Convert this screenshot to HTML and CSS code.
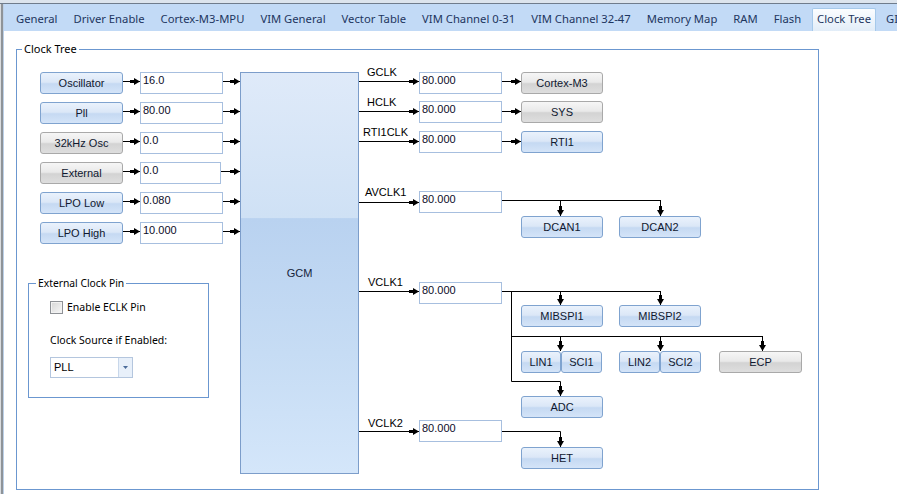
FILE: index.html
```html
<!DOCTYPE html>
<html>
<head>
<meta charset="utf-8">
<link rel="stylesheet" href="styles.css">
</head>
<body>
<div class="window">
  <div class="topstrip"></div>
  <div class="body">
    <div class="edge"></div>
    <div class="main">
      <div class="tabs">
        <div class="tab">General</div>
        <div class="tab">Driver Enable</div>
        <div class="tab">Cortex-M3-MPU</div>
        <div class="tab">VIM General</div>
        <div class="tab">Vector Table</div>
        <div class="tab">VIM Channel 0-31</div>
        <div class="tab">VIM Channel 32-47</div>
        <div class="tab">Memory Map</div>
        <div class="tab">RAM</div>
        <div class="tab">Flash</div>
        <div class="tab active">Clock Tree</div>
        <div class="tab">GIO</div>
      </div>
      <div class="page">
        <div class="group clocktree">
          <span class="legend">Clock Tree</span>
          <div class="leftcol">
            <div class="inputs">
              <div class="row">
                <div class="btn">Oscillator</div>
                <svg class="arrow"><line x1="0" y1="9.5" x2="100%" y2="9.5" marker-end="url(#ah)"/></svg>
                <div class="tb">16.0</div>
                <svg class="arrow grow"><line x1="0" y1="9.5" x2="100%" y2="9.5" marker-end="url(#ah)"/></svg>
              </div>
              <div class="row">
                <div class="btn">Pll</div>
                <svg class="arrow"><line x1="0" y1="9.5" x2="100%" y2="9.5" marker-end="url(#ah)"/></svg>
                <div class="tb">80.00</div>
                <svg class="arrow grow"><line x1="0" y1="9.5" x2="100%" y2="9.5" marker-end="url(#ah)"/></svg>
              </div>
              <div class="row">
                <div class="btn gray">32kHz Osc</div>
                <svg class="arrow"><line x1="0" y1="9.5" x2="100%" y2="9.5" marker-end="url(#ah)"/></svg>
                <div class="tb">0.0</div>
                <svg class="arrow grow"><line x1="0" y1="9.5" x2="100%" y2="9.5" marker-end="url(#ah)"/></svg>
              </div>
              <div class="row">
                <div class="btn gray">External</div>
                <svg class="arrow"><line x1="0" y1="9.5" x2="100%" y2="9.5" marker-end="url(#ah)"/></svg>
                <div class="tb narrow">0.0</div>
                <svg class="arrow grow"><line x1="0" y1="9.5" x2="100%" y2="9.5" marker-end="url(#ah)"/></svg>
              </div>
              <div class="row">
                <div class="btn">LPO Low</div>
                <svg class="arrow"><line x1="0" y1="9.5" x2="100%" y2="9.5" marker-end="url(#ah)"/></svg>
                <div class="tb">0.080</div>
                <svg class="arrow grow"><line x1="0" y1="9.5" x2="100%" y2="9.5" marker-end="url(#ah)"/></svg>
              </div>
              <div class="row">
                <div class="btn">LPO High</div>
                <svg class="arrow"><line x1="0" y1="9.5" x2="100%" y2="9.5" marker-end="url(#ah)"/></svg>
                <div class="tb">10.000</div>
                <svg class="arrow grow"><line x1="0" y1="9.5" x2="100%" y2="9.5" marker-end="url(#ah)"/></svg>
              </div>
            </div>
            <div class="group extpin">
              <span class="legend small">External Clock Pin</span>
              <label class="check"><span class="box"></span>Enable ECLK Pin</label>
              <div class="caption">Clock Source if Enabled:</div>
              <div class="combo">
                <span class="combo-text">PLL</span>
                <span class="drop"><svg width="5" height="3" viewBox="0 0 5 3"><polygon points="0,0 5,0 2.5,3" fill="#4c6c9a"/></svg></span>
              </div>
            </div>
          </div>
          <div class="gcm">GCM</div>
          <div class="outputs">
            <svg class="wires" width="459" height="439" viewBox="359 50 459 439">
              <defs>
                <marker id="ah" viewBox="0 0 10 8" refX="10" refY="4" markerWidth="10" markerHeight="8" markerUnits="userSpaceOnUse" orient="auto">
                  <path class="head" d="M0,2.5H4V0.5L10,4L4,7.5V5.5H0Z"/>
                </marker>
              </defs>
              <g class="arrowed">
                <path d="M359,81.5H419"/>
                <path d="M359,111.5H419"/>
                <path d="M359,141.5H419"/>
                <path d="M359,202.5H419"/>
                <path d="M359,291.5H419"/>
                <path d="M359,431.5H419"/>
                <path d="M502,81.5H521"/>
                <path d="M502,111.5H521"/>
                <path d="M502,141.5H521"/>
                <path d="M560.5,200.5V216"/>
                <path d="M660.5,200.5V216"/>
                <path d="M560.5,291.5V305"/>
                <path d="M660.5,291.5V305"/>
                <path d="M511.5,291.5V381.5H560.5V396"/>
                <path d="M560.5,336.5V351"/>
                <path d="M660.5,336.5V351"/>
                <path d="M762.5,336.5V351"/>
                <path d="M502,431.5H560.5V447"/>
              </g>
              <g class="plain">
                <path d="M502,200.5H661"/>
                <path d="M502,291.5H661"/>
                <path d="M511.5,336.5H763"/>
              </g>
            </svg>

            <span class="lbl l-gclk">GCLK</span>
            <span class="lbl l-hclk">HCLK</span>
            <span class="lbl l-rti">RTI1CLK</span>
            <span class="lbl l-av">AVCLK1</span>
            <span class="lbl l-v1">VCLK1</span>
            <span class="lbl l-v2">VCLK2</span>

            <div class="tb o-tb1">80.000</div>
            <div class="tb o-tb2">80.000</div>
            <div class="tb o-tb3">80.000</div>
            <div class="tb o-tb4">80.000</div>
            <div class="tb o-tb5">80.000</div>
            <div class="tb o-tb6">80.000</div>

            <div class="btn gray o-cm3">Cortex-M3</div>
            <div class="btn gray o-sys">SYS</div>
            <div class="btn o-rti">RTI1</div>
            <div class="btn o-dcan1">DCAN1</div>
            <div class="btn o-dcan2">DCAN2</div>
            <div class="btn o-mib1">MIBSPI1</div>
            <div class="btn o-mib2">MIBSPI2</div>
            <div class="btn o-lin1">LIN1</div>
            <div class="btn o-sci1">SCI1</div>
            <div class="btn o-lin2">LIN2</div>
            <div class="btn o-sci2">SCI2</div>
            <div class="btn gray o-ecp">ECP</div>
            <div class="btn o-adc">ADC</div>
            <div class="btn o-het">HET</div>
          </div>
        </div>
      </div>
    </div>
  </div>
</div>
</body>
</html>
```

FILE: styles.css
```css
html, body {
  margin: 0;
  padding: 0;
  background: #fff;
}

.window {
  width: 897px;
  height: 494px;
  overflow: hidden;
  background: #fff;
  font-family: "Liberation Sans", Arial, sans-serif;
  font-size: 11px;
  color: #000;
}

.topstrip {
  height: 3px;
  background: #dce4ed;
  border-bottom: 1px solid #6f7c8c;
}

.body {
  display: flex;
  height: 490px;
}

.edge {
  width: 4px;
  flex: none;
  background: linear-gradient(to right, #d9dcdf 0 1px, #8e9398 1px 3px, #bcd0e8 3px 4px);
}

.main {
  flex: 1;
  min-width: 0;
  display: flex;
  flex-direction: column;
}

/* ---------- tabs ---------- */
.tabs {
  height: 27px;
  flex: none;
  background: #c2daf6;
  display: flex;
  align-items: flex-end;
  padding-left: 4px;
  font-family: "Noto Sans", "Open Sans", sans-serif;
  font-size: 11.25px;
  color: #1e3660;
  white-space: nowrap;
  overflow: hidden;
}

.tab {
  flex: none;
  padding: 0 8px;
  height: 22px;
  line-height: 20px;
}

.tab.active {
  height: 22px;
  padding: 0 4px;
  margin: 0 2px 0 3px;
  border: 1px solid #a6c9ea;
  border-bottom: none;
  border-radius: 2px 2px 0 0;
  background: linear-gradient(to bottom, #fbfdff, #e2edf8);
  line-height: 20px;
}

/* ---------- page ---------- */
.page {
  flex: 1;
  background: #fff;
  padding: 18px 0 0 12px;
}

.group {
  position: relative;
  border: 1px solid #6b97d0;
  box-sizing: border-box;
}

.legend {
  position: absolute;
  top: -8px;
  left: 5px;
  padding: 0 2px;
  background: #fff;
  line-height: 14px;
  font-family: "Noto Sans", "Open Sans", sans-serif;
  font-size: 11px;
  color: #000;
  white-space: nowrap;
}

.legend.small {
  left: 7px;
  font-size: 10.3px;
}

.clocktree {
  width: 803px;
  height: 441px;
  display: flex;
}

/* ---------- left inputs ---------- */
.leftcol {
  width: 223px;
  flex: none;
  padding-top: 22px;
  box-sizing: border-box;
}

.inputs {
  margin-left: 23px;
  width: 200px;
  display: flex;
  flex-direction: column;
  gap: 8px;
}

.row {
  display: flex;
  height: 22px;
}

.arrow {
  display: block;
  width: 17px;
  height: 22px;
  flex: none;
  overflow: visible;
}

.arrow.grow {
  flex: 1 1 0;
  width: 0;
  min-width: 0;
}

.arrow line,
.wires g path {
  stroke: #000;
  stroke-width: 1;
  fill: none;
}

.wires .arrowed path {
  marker-end: url(#ah);
}

.head {
  fill: #000;
  stroke: none;
}

/* buttons */
.btn {
  box-sizing: border-box;
  width: 83px;
  height: 22px;
  flex: none;
  border: 1px solid #7fa3cf;
  border-radius: 3px;
  background: linear-gradient(to bottom, #eaf2fc 0%, #dbe7f7 46%, #c5d9f2 54%, #d4e4f8 100%);
  display: flex;
  align-items: center;
  justify-content: center;
  font-size: 11px;
  color: #101830;
  white-space: nowrap;
}

.btn.gray {
  border-color: #a9a9a9;
  background: linear-gradient(to bottom, #f6f6f6 0%, #e9e9e9 46%, #d3d3d3 54%, #dedede 100%);
}

/* text boxes */
.tb {
  box-sizing: border-box;
  width: 83px;
  height: 22px;
  flex: none;
  border: 1px solid #a7bfdf;
  background: #fff;
  padding: 1px 0 0 2px;
  line-height: 13px;
  font-size: 11px;
  color: #0c0c28;
}

.tb.narrow {
  width: 81px;
}

/* ---------- external clock pin ---------- */
.extpin {
  margin: 39px 0 0 11px;
  width: 181px;
  height: 115px;
  padding: 17px 0 0 21px;
  font-family: "Noto Sans", "Open Sans", sans-serif;
  font-size: 10.5px;
}

.check {
  display: flex;
  align-items: center;
  gap: 4px;
  height: 13px;
  line-height: 13px;
}

.box {
  width: 13px;
  height: 13px;
  box-sizing: border-box;
  border: 1px solid #8e9196;
  background: linear-gradient(135deg, #d6d6d6, #f7f7f7);
  box-shadow: inset 0 0 0 1px #f2f2f2;
}

.caption {
  margin-top: 19px;
  line-height: 14px;
}

.combo {
  margin-top: 10px;
  width: 83px;
  height: 21px;
  box-sizing: border-box;
  border: 1px solid #b4c6de;
  display: flex;
}

.combo-text {
  flex: 1;
  padding-left: 3px;
  line-height: 19px;
  font-family: "Liberation Sans", Arial, sans-serif;
  font-size: 11px;
}

.drop {
  width: 13px;
  border-left: 1px solid #c8d7ea;
  background: #e8f0fa;
  display: flex;
  align-items: center;
  justify-content: center;
}

.drop svg {
  display: block;
}

/* ---------- GCM ---------- */
.gcm {
  width: 119px;
  height: 402px;
  flex: none;
  margin-top: 22px;
  box-sizing: border-box;
  border: 1px solid #7c9dca;
  background: linear-gradient(to bottom, #dfeaf9 0%, #cfe1f5 36.2%, #b9d2f0 36.4%, #c6dcf4 70%, #d4e6fa 100%);
  display: flex;
  align-items: center;
  justify-content: center;
  font-size: 11px;
  color: #15233b;
}

/* ---------- outputs canvas ---------- */
.outputs {
  position: relative;
  flex: 1;
}

.wires {
  position: absolute;
  left: 0;
  top: 0;
  overflow: visible;
}

.outputs .btn,
.outputs .tb,
.outputs .lbl {
  position: absolute;
}

.outputs .btn {
  width: 82px;
}

.lbl {
  line-height: 13px;
  font-size: 11px;
  white-space: nowrap;
}

.l-gclk { left: 8px; top: 16px; }
.l-hclk { left: 8px; top: 46px; }
.l-rti  { left: 4px; top: 76px; }
.l-av   { left: 6px; top: 136px; }
.l-v1   { left: 9px; top: 226px; }
.l-v2   { left: 9px; top: 367px; }

.o-tb1 { left: 60px; top: 22px; }
.o-tb2 { left: 60px; top: 51px; }
.o-tb3 { left: 60px; top: 81px; }
.o-tb4 { left: 60px; top: 141px; }
.o-tb5 { left: 60px; top: 232px; }
.o-tb6 { left: 60px; top: 370px; }

.o-cm3   { left: 162px; top: 22px; }
.o-sys   { left: 162px; top: 51px; }
.o-rti   { left: 162px; top: 81px; }
.o-dcan1 { left: 162px; top: 166px; }
.o-dcan2 { left: 260px; top: 166px; }
.o-mib1  { left: 162px; top: 255px; }
.o-mib2  { left: 260px; top: 255px; width: 83px; }
.outputs .o-lin1 { left: 162px; top: 301px; width: 40px; }
.outputs .o-sci1 { left: 202px; top: 301px; width: 41px; }
.outputs .o-lin2 { left: 260px; top: 301px; width: 41px; }
.outputs .o-sci2 { left: 301px; top: 301px; width: 41px; }
.outputs .o-ecp  { left: 360px; top: 301px; width: 83px; }
.o-adc   { left: 162px; top: 346px; }
.o-het   { left: 162px; top: 397px; }
```
